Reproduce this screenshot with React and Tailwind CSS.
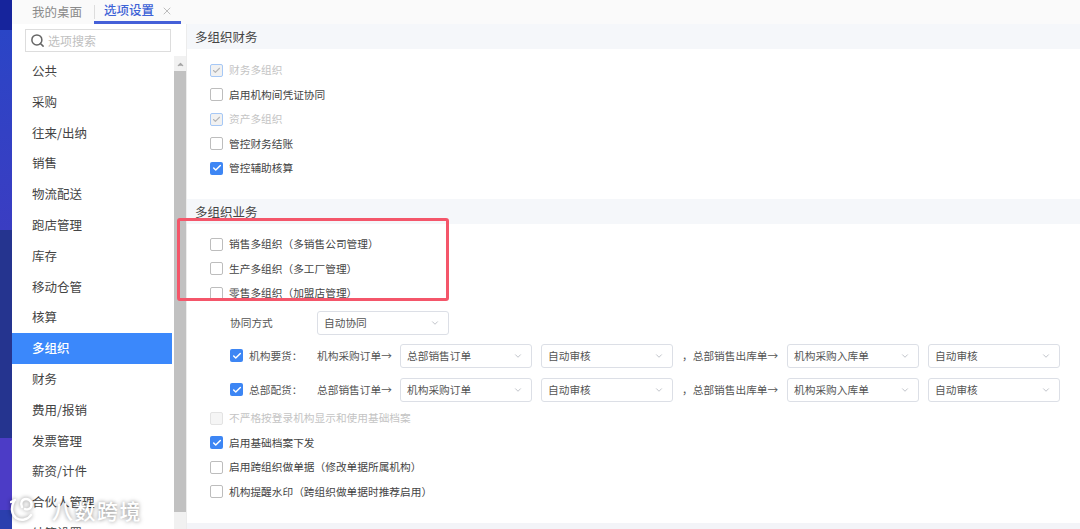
import React from "react";
import { Search, ChevronDown, X, Check, ChevronUp } from "lucide-react";

const menuItems = [
  "公共",
  "采购",
  "往来/出纳",
  "销售",
  "物流配送",
  "跑店管理",
  "库存",
  "移动仓管",
  "核算",
  "多组织",
  "财务",
  "费用/报销",
  "发票管理",
  "薪资/计件",
  "合伙人管理",
  "结算设置",
];

const CheckBox = ({ state }) => {
  if (state === "on") {
    return (
      <span className="w-[13px] h-[13px] shrink-0 rounded-[2px] bg-[#3d86f4] flex items-center justify-center">
        <Check size={10} strokeWidth={3.5} className="text-white" />
      </span>
    );
  }
  if (state === "disabled-on") {
    return (
      <span className="w-[13px] h-[13px] shrink-0 rounded-[2px] border border-[#a6c8f6] bg-[#f1f1f1] flex items-center justify-center">
        <Check size={9} strokeWidth={3} className="text-[#b5b5b5]" />
      </span>
    );
  }
  if (state === "disabled") {
    return <span className="w-[13px] h-[13px] shrink-0 rounded-[2px] border border-[#e3e3e3] bg-[#f5f5f5]" />;
  }
  return <span className="w-[13px] h-[13px] shrink-0 rounded-[2px] border border-[#bdbdbd] bg-white" />;
};

const Option = ({ state, muted, children }) => (
  <div className="h-[24.5px] pl-[23px] flex items-center gap-[6px]">
    <CheckBox state={state} />
    <span className={muted ? "text-[#c4c4c4]" : "text-[#444]"}>{children}</span>
  </div>
);

const Select = ({ value }) => (
  <div className="w-[132px] h-[24px] shrink-0 border border-[#dcdfe6] rounded-[3px] bg-white pl-[6px] pr-[8px] flex items-center justify-between text-[#555]">
    <span className="pt-[1px]">{value}</span>
    <ChevronDown size={10} className="text-[#b5b8bf]" />
  </div>
);

const FlowRow = ({ label, source, first, className }) => (
  <div className={`flex items-center h-[24px] pl-[43px] text-[#555] ${className}`}>
    <CheckBox state="on" />
    <span className="ml-[6px] w-[68px] pt-[1px]">{label}</span>
    <span className="w-[83px] pt-[1px]">{source}→</span>
    <Select value={first} />
    <div className="w-[9px]" />
    <Select value="自动审核" />
    <span className="w-[114px] pl-[9px] pt-[1px]">，总部销售出库单→</span>
    <Select value="机构采购入库单" />
    <div className="w-[9px]" />
    <Select value="自动审核" />
  </div>
);

const SectionTitle = ({ children }) => (
  <div className="h-[25px] bg-[#f5f7fa] pl-[8px] pt-[1px] flex items-center text-[12.5px] text-[#444]">{children}</div>
);

export default function App() {
  return (
    <div
      className="relative w-[1080px] h-[529px] overflow-hidden flex bg-white text-[10.7px]"
      style={{ fontFamily: '"Noto Sans CJK SC", "Noto Sans", sans-serif' }}
    >
      {/* strip of the window behind */}
      <div className="w-[12px] shrink-0 flex flex-col">
        <div className="h-[30px] bg-[#16249c]" />
        <div className="h-[200px] bg-linear-to-b from-[#2a45c6] to-[#3a3dc2]" />
        <div className="h-[208px] bg-[#25348f]" />
        <div className="h-[72px] bg-[#4c3cc6]" />
        <div className="flex-1 bg-[#2b3fae]" />
      </div>

      <div className="flex-1 flex flex-col min-w-0">
        {/* tabs */}
        <div className="h-[24px] shrink-0 bg-[#fafafa] flex items-stretch text-[12.5px]">
          <div className="w-[82px] pl-[20px] flex items-center text-[#8a8a8a]">我的桌面</div>
          <div className="w-[87px] pl-[10px] flex items-center gap-[7px] border-b-[3px] border-[#4560d8] text-[#3e63d6] font-medium relative">
            <span className="absolute left-0 top-[5px] h-[14px] w-px bg-[#dddddd]" />
            选项设置
            <X size={12} className="text-[#bdbdbd]" />
          </div>
        </div>

        <div className="flex-1 flex min-h-0">
          {/* side menu */}
          <div className="w-[175px] shrink-0 flex flex-col border-r border-[#ececec]">
            <div className="h-[32px] shrink-0 pl-[13px] pr-[15px] pt-[5px]">
              <div className="h-[23px] border border-[#dddddd] flex items-center pl-[4px] gap-[3px] text-[12px] text-[#c0c0c0]">
                <Search size={15} strokeWidth={2.4} className="text-[#666]" />
                选项搜索
              </div>
            </div>
            <div className="flex-1 flex min-h-0">
              <div className="w-[160px] shrink-0 text-[12.5px] text-[#444]">
                {menuItems.map((item) => (
                  <div
                    key={item}
                    className={`h-[30.8px] pl-[20px] flex items-center ${item === "多组织" ? "bg-[#3b88fb] text-white font-medium" : ""}`}
                  >
                    {item}
                  </div>
                ))}
              </div>
              <div className="w-[2px]" />
              <div className="w-[12px] bg-[#f1f1f1] flex flex-col items-center">
                <ChevronUp size={9} strokeWidth={3} className="text-[#a5a5a5] mt-[4px] mb-[2px] fill-[#a5a5a5]" />
                <div className="w-full h-[441px] bg-[#c1c1c1]" />
              </div>
            </div>
          </div>

          {/* settings */}
          <div className="flex-1 min-w-0 flex flex-col">
            <SectionTitle>多组织财务</SectionTitle>
            <div className="pt-[9px] h-[150px] shrink-0">
              <Option state="disabled-on" muted>财务多组织</Option>
              <Option>启用机构间凭证协同</Option>
              <Option state="disabled-on" muted>资产多组织</Option>
              <Option>管控财务结账</Option>
              <Option state="on">管控辅助核算</Option>
            </div>
            <SectionTitle>多组织业务</SectionTitle>
            <div className="pt-[8px]">
              <Option>销售多组织（多销售公司管理）</Option>
              <Option>生产多组织（多工厂管理）</Option>
              <Option>零售多组织（加盟店管理）</Option>
            </div>
            <div className="flex items-center h-[24px] mt-[5px] pl-[43px] text-[#555]">
              <span className="w-[87px] pt-[1px]">协同方式</span>
              <Select value="自动协同" />
            </div>
            <FlowRow className="mt-[9px]" label="机构要货：" source="机构采购订单" first="总部销售订单" />
            <FlowRow className="mt-[10px]" label="总部配货：" source="总部销售订单" first="机构采购订单" />
            <div className="mt-[4.5px]">
              <Option state="disabled" muted>不严格按登录机构显示和使用基础档案</Option>
              <Option state="on">启用基础档案下发</Option>
              <Option>启用跨组织做单据（修改单据所属机构）</Option>
              <Option>机构提醒水印（跨组织做单据时推荐启用）</Option>
            </div>
            <div className="flex-1" />
            <div className="h-[6px] shrink-0 bg-[#f3f4f8]" />
          </div>
        </div>
      </div>

      {/* red highlight drawn over the screenshot */}
      <div className="absolute left-[177px] top-[218px] w-[272px] h-[83px] border-[3px] border-[#f4566a] rounded-[3px]" />

      {/* watermark */}
      <div className="absolute left-[10px] top-[496px] flex items-center gap-[15px] text-white [text-shadow:0_0_4px_rgba(0,0,0,0.5)]">
        <svg
          width="27"
          height="28"
          viewBox="0 0 27 28"
          fill="none"
          stroke="white"
          strokeWidth="2.4"
          strokeLinecap="round"
          className="[filter:drop-shadow(0_0_2px_rgba(0,0,0,0.45))]"
        >
          <path d="M4 5c-3 6-3 13 2 17 5 3 12 2 15-3" />
          <path d="M12 11c-2-4 0-8 4-8s7 4 5 8c-1 2-4 3-6 2" />
          <path d="M1 6l4-2" />
        </svg>
        <span className="text-[21px] leading-none tracking-[1.5px] font-medium">八数跨境</span>
      </div>
    </div>
  );
}
